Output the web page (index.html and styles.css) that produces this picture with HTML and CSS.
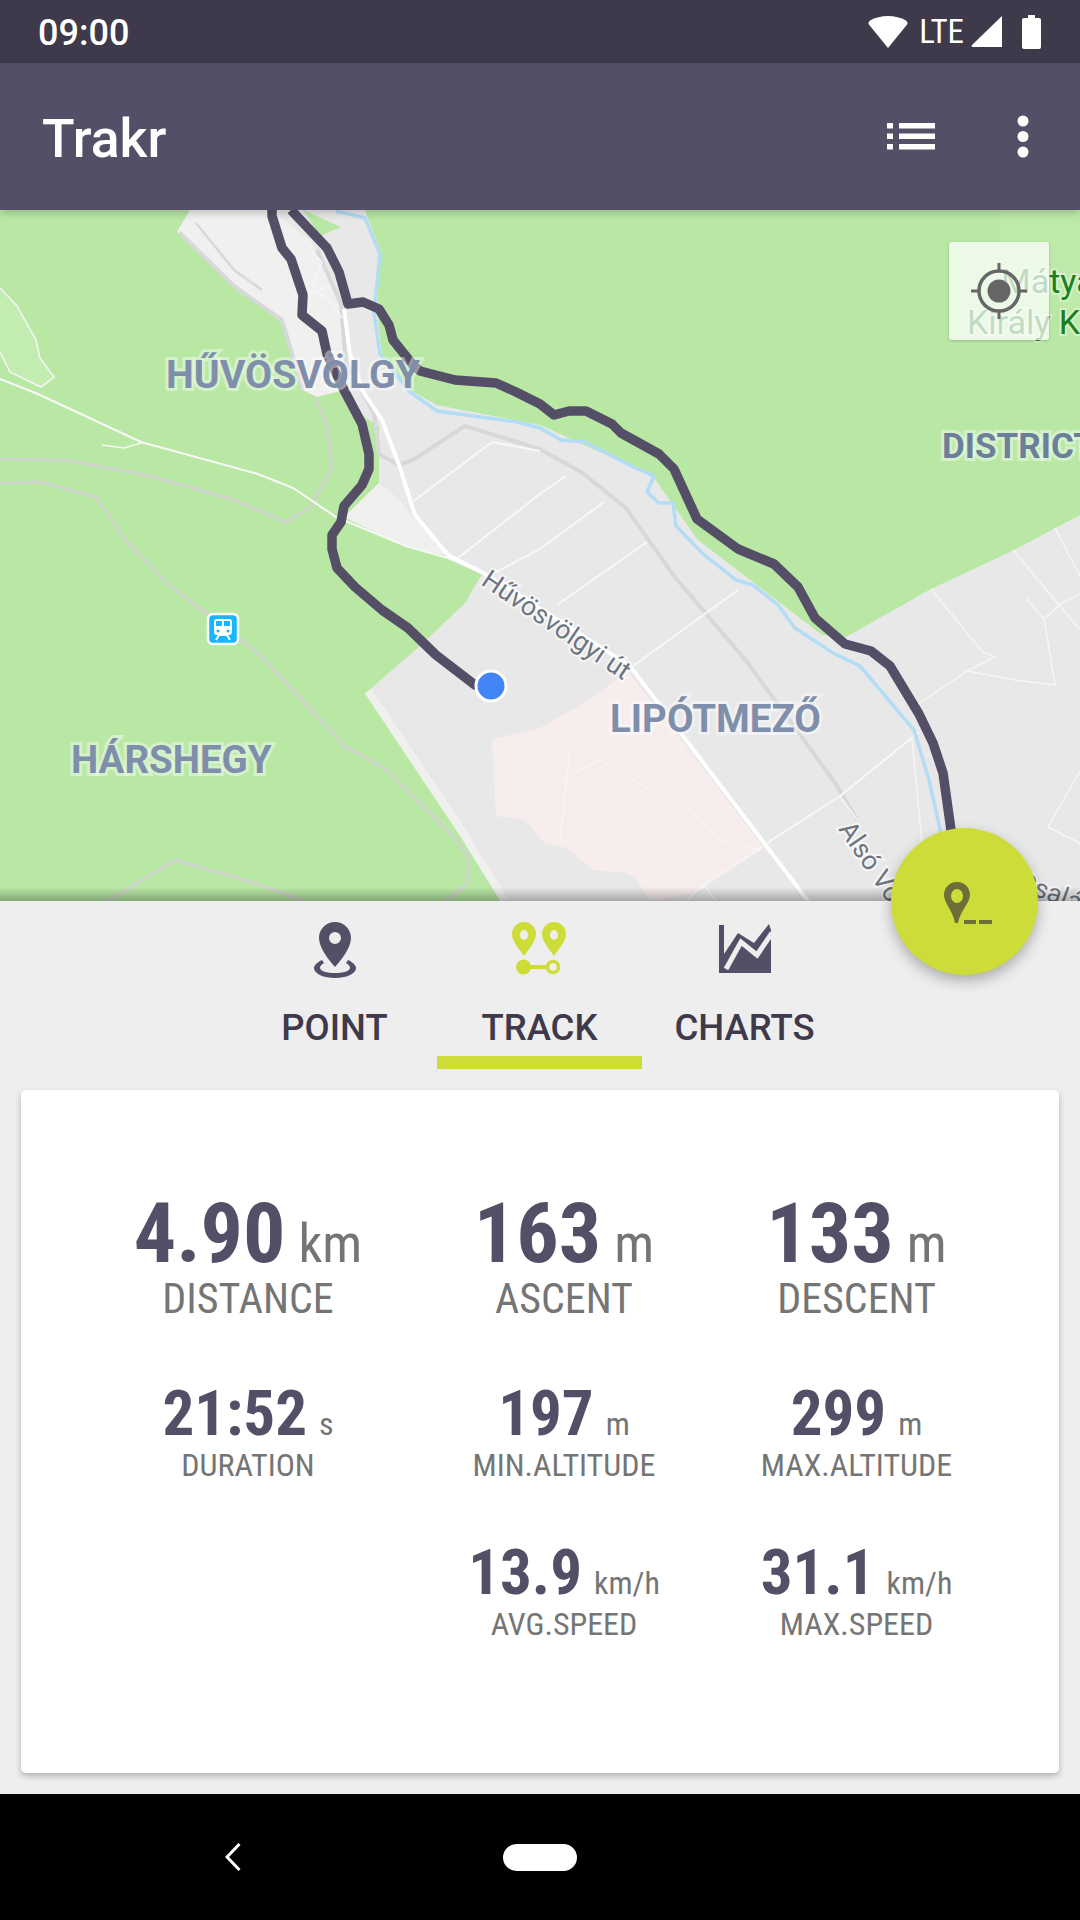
FILE: index.html
```html
<!DOCTYPE html>
<html lang="en">
<head>
    <meta charset="UTF-8">
    <meta name="viewport" content="width=device-width, initial-scale=1.0">
    <title>Trakr</title>
    <link rel="stylesheet" href="styles.css">
</head>
<body>
<div class="app">

    <div class="status-bar">
        <span class="status-time">09:00</span>
        <div class="status-icons">
            <svg class="icon-wifi" width="40" height="32" viewBox="0 0 40 32"><path d="M20 32 L0.5 8 Q0 6 2 4.500 Q10 0 20 0 Q30 0 38 4.500 Q40 6 39.500 8 Z" fill="#fff"/></svg>
            <span class="status-lte">LTE</span>
            <svg class="icon-signal" width="31" height="31" viewBox="0 0 31 31"><path d="M31 0 V31 H2 Q0 31 1 29 Z" fill="#fff"/></svg>
            <svg class="icon-battery" width="19" height="34" viewBox="0 0 19 34"><path d="M6 0 H13 V3 H17 Q19 3 19 5 V32 Q19 34 17 34 H2 Q0 34 0 32 V5 Q0 3 2 3 H6 Z" fill="#fff"/></svg>
        </div>
    </div>

    <div class="app-bar">
        <h1 class="app-title">Trakr</h1>
        <svg class="icon-list" width="48" height="27" viewBox="0 0 48 27">
            <rect x="0" y="0" width="6" height="5.500" fill="#fff"/><rect x="12" y="0" width="36" height="5.500" fill="#fff"/>
            <rect x="0" y="10.500" width="6" height="5.500" fill="#fff"/><rect x="12" y="10.500" width="36" height="5.500" fill="#fff"/>
            <rect x="0" y="21" width="6" height="5.500" fill="#fff"/><rect x="12" y="21" width="36" height="5.500" fill="#fff"/>
        </svg>
        <svg class="icon-more" width="12" height="43" viewBox="0 0 12 43">
            <circle cx="6" cy="6" r="5.500" fill="#fff"/><circle cx="6" cy="21.500" r="5.500" fill="#fff"/><circle cx="6" cy="37" r="5.500" fill="#fff"/>
        </svg>
    </div>

    <div class="map">
        <svg class="map-canvas" width="1080" height="691" viewBox="0 210 1080 691">
            <rect x="0" y="210" width="1080" height="691" fill="#b9e8a5"/>
            <path d="M0 288 L17 306 L36 340 L40 358 L54 377 L41 387 L10 372 L0 352 Z" fill="#c2ecb0"/>
            <path d="M1000 210 H1080 V330 Q1040 280 1000 250 Z" fill="#bdeaa9"/>

            <!-- built-up areas -->
            <path class="land" d="M190 210 L177 232 L234 286 L282 320 L303 390 L317 397 L344 390 L358 413 L379 426 L379 483 L344 518 L448 556 L482 574 L465 603 L420 646 L368 691 L461 830 L505 901 H1080 V515 L1012 551 L929 590 L846 637 L822 635 L698 540 L654 478 L633 467 L540 425 L437 405 L410 390 L382 354 L377 313 L380 250 L365 210 Z"/>
            <path class="land-light" d="M190 210 L177 232 L234 286 L282 320 L303 390 L317 397 L344 390 L340 300 L310 240 L270 210 Z"/>
            <path class="land-light" d="M344 517 L379 483 L399 499 L413 517 L448 556 L403 546 Z"/>
            <path class="land-edge" d="M368 691 L461 830 L505 901"/>
            <path d="M303 210 L341 227 L320 236 Z" fill="#b9e8a5"/>
            <path class="land-pink" d="M492 739 L540 728 L592 698 L628 671 L764 848 L695 893 L650 901 L636 878 L626 873 L593 870 L567 848 L545 843 L524 820 L496 816 Z"/>

            <!-- rail and paths -->
            <path class="rail" d="M179 232 L234 286 L282 320 L303 390"/>
            <path class="rail-thin" d="M196 223 L234 270 L262 290"/>
            <path class="rail" d="M317 250 L341 304 L346 363 L374 413 L379 454 L399 465 L413 460 L465 426 L540 449 L581 472 L626 508 L674 576 L747 662 L836 784 L857 820"/>
            <path class="trail" d="M0 459 L65 460 L150 476 L231 499 L286 522 L310 508 L332 467 L327 426 L315 397"/>
            <path class="trail" d="M0 483 L41 482 L96 497 L127 542 L169 585 L207 614 L258 653 L317 716 L344 746 L384 768 L458 841 L468 857 L468 884 L444 901"/>
            <path class="trail" d="M107 901 L176 860 L258 884 L303 901"/>

            <!-- roads -->
            <path class="road-thin" d="M0 288 L17 306 L36 340 L40 358 L54 377 L41 387 L10 372 L0 352"/>
            <path class="road-thin" d="M102 445 L124 448 L141 443"/>
            <path class="road-thin" d="M310 250 L322 262 L312 290 L330 300 L342 318 M306 296 L330 285"/>
            <path class="road" d="M0 379 L38 394 L141 442 L258 474 L293 488 L336 517 L406 546 L448 558 L489 576"/>
            <path class="road-main" d="M344 309 L350 354 L362 390 L382 420 L399 465 L415 515 L448 555 L489 576 L630 666 L808 901"/>
            <path class="road" d="M411 503 L492 442 L540 451"/>
            <path class="road" d="M458 558 L540 494 L566 476"/>
            <path class="road" d="M489 576 L540 549 L604 502"/>
            <path class="road" d="M557 605 L647 542"/>
            <path class="road" d="M633 666 L738 590"/>
            <path class="road" d="M767 843 L840 796 L919 732"/>
            <path class="road-thin" d="M917 705 L967 671 L995 657 L982 651 L931 589"/>
            <path class="road-thin" d="M967 671 L1015 680 L1055 685 L1044 619 L1026 598"/>
            <path class="road-thin" d="M1044 619 L1062 603 L1080 594"/>
            <path class="road-thin" d="M1013 550 L1080 630"/>
            <path class="road-thin" d="M1055 528 L1080 576"/>
            <path class="road-thin" d="M1080 771 L1048 827 L1080 843"/>
            <path class="road-thin" d="M840 796 L857 820"/>
            <path class="road-thin" d="M912 739 L922 843"/>
            <path class="road-thin" d="M698 891 L705 886 L716 901"/>
            <path class="road-thin" d="M768 843 L700 887 L687 901"/>
            <path class="road-faint" d="M562 780 L580 770 L600 760 L650 790 L690 810 L720 840 L760 850"/>
            <path class="road-faint" d="M560 840 L570 750"/>

            <path class="river" d="M336 211 L365 218 L380 254 L374 313 L380 354 L410 392 L437 411 L517 422 L540 428 L561 440 L585 442 L633 467 L654 476 L647 492 L659 503 L673 503 L676 526 L702 553 L736 580 L753 585 L778 605 L795 628 L833 653 L860 666 L914 730 L929 780 L941 834"/>

            <!-- recorded track -->
            <path class="track" d="M272 210 L272 216 L282 248 L291 259 L303 295 L302 315 L322 331 L327 354 L344 390 L362 424 L369 454 L369 469 L362 485 L344 506 L341 522 L332 535 L332 549 L337 568 L355 587 L382 610 L408 628 L436 655 L475 685 L491 686"/>
            <path class="track" d="M291 210 L327 248 L339 272 L348 304 L363 302 L379 309 L389 325 L393 340 L413 365 L420 371 L455 380 L496 383 L516 392 L540 404 L554 415 L569 411 L586 411 L612 424 L621 433 L659 454 L674 469 L697 519 L738 549 L774 564 L798 587 L815 618 L845 644 L871 651 L890 666 L919 714 L933 743 L943 773 L951 830 L955 860"/>

            <!-- labels -->
            <text class="label-area label-wide" x="166" y="388">HŰVÖSVÖLGY</text>
            <text class="label-area" x="71" y="773">HÁRSHEGY</text>
            <text class="label-area" x="610" y="732">LIPÓTMEZŐ</text>
            <text class="label-area label-dark" x="942" y="458">DISTRICT</text>
            <text class="label-park" x="1001" y="293">Mátyás</text>
            <text class="label-park" x="967" y="334">Király Kút</text>
            <text class="label-street" transform="translate(480 584) rotate(34)">Hűvösvölgyi út</text>
            <text class="label-street" transform="translate(838 829) rotate(56)">Alsó Vó</text>
            <text class="label-street" transform="translate(1016 889) rotate(20)">Csalá</text>

            <!-- station pin -->
            <rect x="208" y="614" width="30" height="30" rx="5" fill="#17b7ff" stroke="#fff" stroke-width="2.500"/>
            <rect x="214" y="619" width="18" height="16" rx="3" fill="#fff"/>
            <rect x="216" y="621" width="6" height="5" fill="#17b7ff"/>
            <rect x="224" y="621" width="6" height="5" fill="#17b7ff"/>
            <circle cx="218" cy="631" r="1.500" fill="#17b7ff"/>
            <circle cx="228" cy="631" r="1.500" fill="#17b7ff"/>
            <path d="M216 640 L219 635 H227 L230 640" fill="none" stroke="#fff" stroke-width="2"/>

            <circle cx="491" cy="686" r="15" fill="#4285f4" stroke="#fff" stroke-width="3"/>
        </svg>

        <div class="locate-btn">
            <svg width="58" height="58" viewBox="0 0 58 58">
                <circle cx="29" cy="29" r="20" fill="none" stroke="#666" stroke-width="3.500"/>
                <circle cx="29" cy="29" r="11.500" fill="#666"/>
                <path d="M29 1 V10 M29 48 V57 M1 29 H10 M48 29 H57" stroke="#666" stroke-width="3"/>
            </svg>
        </div>
        <div class="map-fade"></div>
    </div>

    <div class="tabs">
        <div class="tab">
            <svg class="tab-icon" width="44" height="56" viewBox="0 0 44 56">
                <path d="M22 0 C13 0 6 7 6 16 C6 26 16 38 22 45 C28 38 38 26 38 16 C38 7 31 0 22 0 Z M22 10 A6 6 0 1 1 22 22 A6 6 0 1 1 22 10 Z" fill="#544f66" fill-rule="evenodd"/>
                <path d="M9 38 C3 41 1 44 1 46 C1 52 11 56 22 56 C33 56 43 52 43 46 C43 44 41 41 35 38 L33 41 C36 43 37 44 37 46 C37 49 30 51 22 51 C14 51 7 49 7 46 C7 44 8 43 11 41 Z" fill="#544f66"/>
            </svg>
            <span class="tab-name">POINT</span>
        </div>
        <div class="tab tab-active">
            <svg class="tab-icon" width="56" height="56" viewBox="0 0 56 56">
                <path d="M12 0 C5 0 0 6 0 12 C0 19 7 27 12 34 C17 27 24 19 24 12 C24 6 19 0 12 0 Z M12 8 A4 5 0 1 1 12 18 A4 5 0 1 1 12 8 Z" fill="#cddc39" fill-rule="evenodd"/>
                <path d="M42 0 C35 0 30 6 30 12 C30 19 37 27 42 34 C47 27 54 19 54 12 C54 6 49 0 42 0 Z M42 8 A4 5 0 1 1 42 18 A4 5 0 1 1 42 8 Z" fill="#cddc39" fill-rule="evenodd"/>
                <circle cx="11.500" cy="45" r="7.500" fill="#cddc39"/>
                <rect x="17" y="43" width="20" height="4" fill="#cddc39"/>
                <circle cx="41" cy="45" r="5.500" fill="none" stroke="#cddc39" stroke-width="3.500"/>
            </svg>
            <span class="tab-name">TRACK</span>
        </div>
        <div class="tab">
            <svg class="tab-icon" width="52" height="56" viewBox="0 0 52 56">
                <path d="M0 3 H5 V32 L19 11 L35 21 L50 2 L52 8 V51 H0 Z" fill="#544f66"/>
                <path d="M7 47 L22 20 L38 33 L53 11" fill="none" stroke="#eee" stroke-width="5"/>
            </svg>
            <span class="tab-name">CHARTS</span>
        </div>
    </div>

    <div class="card">
        <div class="stats-grid">
            <div class="stat stat-big">
                <div class="stat-value"><span class="stat-num">4.90</span><span class="stat-unit">km</span></div>
                <div class="stat-label">DISTANCE</div>
            </div>
            <div class="stat stat-big">
                <div class="stat-value"><span class="stat-num">163</span><span class="stat-unit">m</span></div>
                <div class="stat-label">ASCENT</div>
            </div>
            <div class="stat stat-big">
                <div class="stat-value"><span class="stat-num">133</span><span class="stat-unit">m</span></div>
                <div class="stat-label">DESCENT</div>
            </div>

            <div class="stat">
                <div class="stat-value"><span class="stat-num">21:52</span><span class="stat-unit">s</span></div>
                <div class="stat-label">DURATION</div>
            </div>
            <div class="stat">
                <div class="stat-value"><span class="stat-num">197</span><span class="stat-unit">m</span></div>
                <div class="stat-label">MIN.ALTITUDE</div>
            </div>
            <div class="stat">
                <div class="stat-value"><span class="stat-num">299</span><span class="stat-unit">m</span></div>
                <div class="stat-label">MAX.ALTITUDE</div>
            </div>

            <div class="stat"></div>
            <div class="stat">
                <div class="stat-value"><span class="stat-num">13.9</span><span class="stat-unit">km/h</span></div>
                <div class="stat-label">AVG.SPEED</div>
            </div>
            <div class="stat">
                <div class="stat-value"><span class="stat-num">31.1</span><span class="stat-unit">km/h</span></div>
                <div class="stat-label">MAX.SPEED</div>
            </div>
        </div>
    </div>

    <div class="nav-bar">
        <svg class="nav-back" width="16" height="28" viewBox="0 0 16 28"><path d="M14.500 1 L2 14 L14.500 27" fill="none" stroke="#fff" stroke-width="3"/></svg>
        <div class="nav-home"></div>
    </div>

    <button class="fab">
        <svg width="52" height="44" viewBox="0 0 52 44">
            <path d="M15 1 C7 1 2 7 2 14 C2 22 11 30 13 42 H16 C18 30 28 22 28 14 C28 7 23 1 15 1 Z M15 8 A6 7 0 1 1 15 22 A6 7 0 1 1 15 8 Z" fill="#6e6f38" fill-rule="evenodd"/>
            <rect x="22" y="39" width="12" height="4" fill="#6e6f38"/>
            <rect x="37" y="39" width="13" height="4" fill="#6e6f38"/>
        </svg>
    </button>

</div>
</body>
</html>
```

FILE: styles.css
```css
body {
    margin: 0;
    padding: 0;
    background-color: #000;
    font-family: Roboto, "Liberation Sans", sans-serif;
}
.app {
    position: relative;
    display: flex;
    flex-direction: column;
    width: 1080px;
    height: 1920px;
    overflow: hidden;
    background-color: #eeeeee;
}

/* status bar */
.status-bar {
    display: flex;
    align-items: center;
    justify-content: space-between;
    height: 63px;
    padding: 0 39px 0 38px;
    background-color: #3e3a4b;
    color: #fff;
}
.status-time {
    padding-top: 3px;
    font-size: 36px;
    font-weight: 500;
}
.status-icons {
    display: flex;
    align-items: center;
}
.status-lte {
    margin: 0 7px 0 11px;
    font-size: 33px;
    font-stretch: 75%;
}
.icon-battery {
    margin-left: 20px;
}

/* app bar */
.app-bar {
    position: relative;
    z-index: 2;
    display: flex;
    align-items: center;
    height: 147px;
    padding: 0 51px 0 42px;
    background-color: #544f66;
    box-shadow: 0 3px 8px rgba(0, 0, 0, 0.2);
}
.app-title {
    flex: 1;
    margin: 0;
    padding-top: 4px;
    color: #fff;
    font-size: 53.500px;
    font-weight: 500;
}
.icon-list {
    margin-right: 82px;
}

/* map */
.map {
    position: relative;
    height: 691px;
    overflow: hidden;
}
.map-canvas {
    display: block;
}
.map-fade {
    position: absolute;
    left: 0;
    right: 0;
    bottom: 0;
    height: 14px;
    background: linear-gradient(rgba(0, 0, 0, 0), rgba(0, 0, 0, 0.28));
}
.locate-btn {
    position: absolute;
    left: 949px;
    top: 32px;
    display: flex;
    align-items: center;
    justify-content: center;
    width: 100px;
    height: 98px;
    border-radius: 3px;
    background-color: rgba(255, 255, 255, 0.72);
    box-shadow: 0 1px 3px rgba(0, 0, 0, 0.2);
}
.land { fill: #e8e8e8; }
.land-light { fill: #f0f0ee; }
.land-pink { fill: #f8eded; }
.land-edge { fill: none; stroke: #f0f0ee; stroke-width: 8; }
.rail { fill: none; stroke: #d6d8da; stroke-width: 4; }
.rail-thin { fill: none; stroke: #d6d8da; stroke-width: 2.5; }
.trail { fill: none; stroke: #ccd6c6; stroke-width: 3.5; }
.road { fill: none; stroke: #f8f8f8; stroke-width: 2; }
.road-main { fill: none; stroke: #fff; stroke-width: 4; }
.road-thin { fill: none; stroke: #f6f6f6; stroke-width: 1.5; }
.road-faint { fill: none; stroke: #fbf6f6; stroke-width: 1; }
.river { fill: none; stroke: #b3dcf5; stroke-width: 3.5; }
.track {
    fill: none;
    stroke: #544f66;
    stroke-width: 9.500;
    stroke-linejoin: round;
}
.label-area {
    fill: #7f8fab;
    font-family: Roboto, sans-serif;
    font-size: 38.500px;
    font-weight: 700;
    stroke: rgba(255, 255, 255, 0.42);
    stroke-width: 6;
    paint-order: stroke;
}
.label-wide { font-size: 39.300px; }
.label-dark { fill: #6b7f9b; font-size: 35px; }
.label-park {
    fill: #1b7e1f;
    font-family: Roboto, sans-serif;
    font-size: 34px;
    stroke: rgba(255, 255, 255, 0.4);
    stroke-width: 4;
    paint-order: stroke;
}
.label-street {
    fill: #6f7580;
    font-family: Roboto, sans-serif;
    font-size: 26.500px;
    stroke: rgba(255, 255, 255, 0.6);
    stroke-width: 4;
    paint-order: stroke;
}

/* tabs */
.tabs {
    display: flex;
    justify-content: center;
    height: 168px;
    margin-bottom: 21px;
    padding-right: 1px;
}
.tab {
    display: flex;
    flex-direction: column;
    align-items: center;
    width: 205px;
    box-sizing: border-box;
    padding-top: 21px;
}
.tab-icon {
    display: block;
}
.tab-name {
    margin-top: 29px;
    color: #3e3a4b;
    font-size: 36.500px;
    font-weight: 500;
    line-height: 42px;
}
.tab-active {
    border-bottom: 13px solid #cddc39;
    height: 168px;
}

/* stats card */
.card {
    flex: 1;
    margin: 0 21px 21px;
    border-radius: 5px;
    background-color: #fff;
    box-shadow: 0 3px 6px rgba(0, 0, 0, 0.25);
}
.stats-grid {
    display: grid;
    grid-template-columns: 316px 316px 269px;
    grid-template-rows: 183px 159px 160px;
    padding: 116px 0 0 69px;
}
.stat {
    font-stretch: 75%;
    text-align: center;
}
.stat-value {
    display: flex;
    align-items: baseline;
    justify-content: center;
    gap: 12px;
    height: 50px;
    white-space: nowrap;
}
.stat-num {
    color: #544f66;
    font-size: 63px;
    font-weight: 700;
    line-height: 50px;
}
.stat-unit {
    color: #757575;
    font-size: 32px;
    line-height: 1;
}
.stat-label {
    margin-top: 8px;
    color: #757575;
    font-size: 32px;
    line-height: 36px;
}
.stat-big .stat-value { height: 57px; gap: 13px; }
.stat-big .stat-num { font-size: 84px; line-height: 56px; }
.stat-big .stat-unit { font-size: 53px; }
.stat-big .stat-label { margin-top: 11px; font-size: 42px; line-height: 50px; }

/* nav bar */
.nav-bar {
    position: relative;
    display: flex;
    align-items: center;
    justify-content: center;
    height: 126px;
    background-color: #000;
}
.nav-back {
    position: absolute;
    left: 225px;
    top: 49px;
}
.nav-home {
    width: 74px;
    height: 27px;
    border-radius: 14px;
    background-color: #fff;
}

/* floating button */
.fab {
    position: absolute;
    left: 890.5px;
    top: 828px;
    display: flex;
    align-items: center;
    justify-content: center;
    width: 147px;
    height: 147px;
    padding: 3px 0 0 8px;
    border: none;
    border-radius: 50%;
    background-color: #cddc39;
    box-shadow: 0 6px 14px rgba(0, 0, 0, 0.28);
}
```
